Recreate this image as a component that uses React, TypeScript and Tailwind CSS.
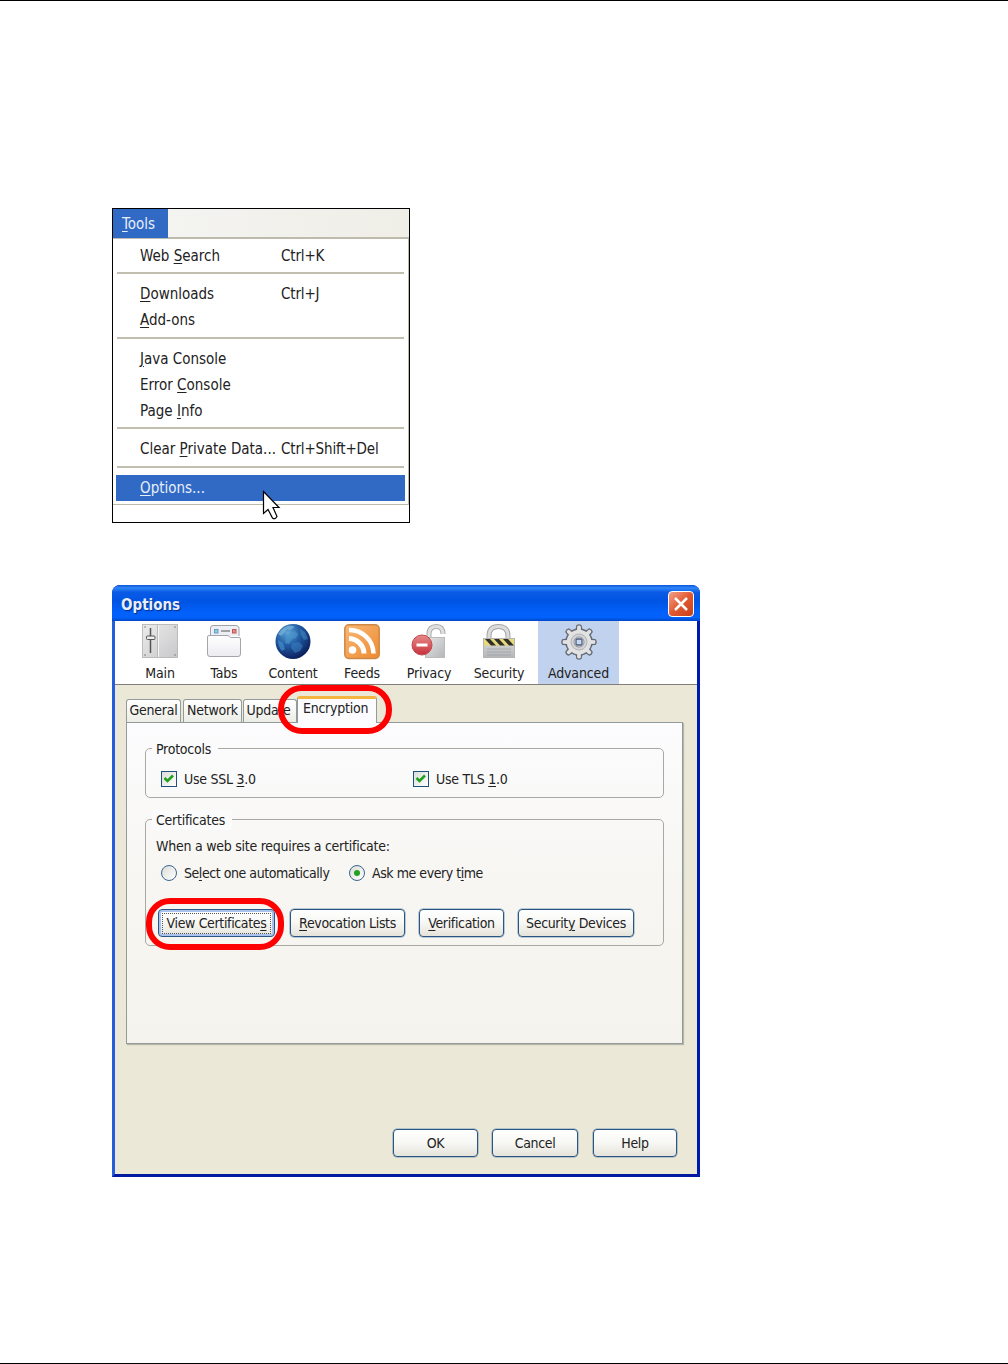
import React from 'react';
import clsx from 'clsx';

// '&' marks the accelerator letter, as in native menu resources
function Label({ text, className }: { text: string; className?: string }) {
  const at = text.indexOf('&');
  if (at < 0) return <span className={clsx('whitespace-pre', className)}>{text}</span>;
  return (
    <span className={clsx('whitespace-pre', className)}>
      {text.slice(0, at)}
      <span className="underline decoration-1 underline-offset-2">{text[at + 1]}</span>
      {text.slice(at + 2)}
    </span>
  );
}

interface MenuEntry {
  label: string;
  shortcut?: string;
  active?: boolean;
}

const menuGroups: MenuEntry[][] = [
  [{ label: 'Web &Search', shortcut: 'Ctrl+K' }],
  [{ label: '&Downloads', shortcut: 'Ctrl+J' }, { label: '&Add-ons' }],
  [{ label: '&Java Console' }, { label: 'Error &Console' }, { label: 'Page &Info' }],
  [{ label: 'Clear &Private Data...', shortcut: 'Ctrl+Shift+Del' }],
  [{ label: '&Options...', active: true }],
];

function Cursor() {
  return (
    <svg className="absolute left-[149px] top-[281px]" width="20" height="32" viewBox="0 0 20 32">
      <path d="M1.500 1.500V23.500L6 19.500L10.500 28Q13 30 15 26.500L11 17.500H17Z" fill="#fff" stroke="#000" strokeWidth="1.200" />
    </svg>
  );
}

function ToolsMenu() {
  return (
    <div className="relative h-[315px] w-[298px] border border-black bg-white text-[15px]">
      <div className="flex h-[30px] border-b-2 border-[#bfbbac] bg-gradient-to-r from-[#f5f5f3] to-[#efeee7]">
        <div className="h-[29px] w-[55px] bg-[#316ac5] pl-[9px] leading-[30px] text-[#e8effa]">
          <Label text="&Tools" />
        </div>
      </div>
      <div className="h-[266px] border-b border-r border-[#bfbbac] px-[3px] pt-1">
        {menuGroups.map((group, i) => (
          <React.Fragment key={i}>
            {i > 0 && (
              <div className="h-[12.5px] px-[1px] pt-[3px]">
                <div className="h-[2px] bg-[#c3bfb0]" />
              </div>
            )}
            {group.map((item) => (
              <div
                key={item.label}
                className={clsx('flex h-[26px] items-center pl-6', item.active ? 'bg-[#316ac5] text-[#e8effa]' : 'text-[#222]')}
              >
                <Label text={item.label} className="w-[141px]" />
                {item.shortcut && <Label text={item.shortcut} className="tracking-[-0.15px]" />}
              </div>
            ))}
          </React.Fragment>
        ))}
      </div>
      <Cursor />
    </div>
  );
}

function MainIcon() {
  return (
    <svg width="36" height="36" viewBox="0 0 36 36">
      <defs>
        <linearGradient id="main-bg" x1="0" y1="0" x2="1" y2="1">
          <stop offset="0" stopColor="#ececec" />
          <stop offset="1" stopColor="#c8c8ca" />
        </linearGradient>
      </defs>
      <rect x="0.500" y="0.500" width="35" height="33" fill="url(#main-bg)" stroke="#bcbcbe" />
      <path d="M15.500 1V33" stroke="#bbb" />
      <path d="M16.500 1V33" stroke="#f5f5f5" />
      <path d="M8.500 4V29" stroke="#555" strokeWidth="1.500" />
      <rect x="4.500" y="12" width="8.500" height="3.500" rx="1" fill="#eee" stroke="#555" />
      <g fill="#777">
        <circle cx="3" cy="3" r="0.800" />
        <circle cx="33" cy="3" r="0.800" />
        <circle cx="3" cy="31" r="0.800" />
        <circle cx="33" cy="31" r="0.800" />
      </g>
    </svg>
  );
}

function TabsIcon() {
  return (
    <svg width="36" height="36" viewBox="0 0 36 36">
      <defs>
        <linearGradient id="tabs-bg" x1="0" y1="0" x2="0" y2="1">
          <stop offset="0" stopColor="#fff" />
          <stop offset="1" stopColor="#ececf0" />
        </linearGradient>
      </defs>
      <path d="M4.500 12V4Q4.500 1.500 7 1.500H30Q32.500 1.500 33 4V12" fill="#eeeff4" stroke="#a0a2aa" />
      <rect x="8.500" y="5.500" width="3.500" height="3.500" fill="#9dc6df" stroke="#5f9fc4" />
      <path d="M15 7H24" stroke="#888" strokeWidth="1.500" />
      <rect x="26.500" y="5.500" width="3.500" height="3.500" fill="#e08a8a" stroke="#c65555" />
      <path d="M1.500 13Q1.500 11.500 3 11.500H22L24.500 13.500H33Q34.500 13.500 34.500 15V30Q34.500 32.500 32 32.500H4Q1.500 32.500 1.500 30Z" fill="url(#tabs-bg)" stroke="#a3a4ac" />
    </svg>
  );
}

function GlobeIcon() {
  return (
    <svg width="36" height="36" viewBox="0 0 36 36">
      <defs>
        <radialGradient id="globe-bg" cx="0.35" cy="0.25" r="0.8">
          <stop offset="0" stopColor="#5fa6d8" />
          <stop offset="0.45" stopColor="#215ba3" />
          <stop offset="1" stopColor="#0a1a58" />
        </radialGradient>
      </defs>
      <circle cx="18" cy="17.500" r="17.500" fill="url(#globe-bg)" />
      <path d="M3 10Q8 2 16 1.500L20 3L15 6L12 5L9 9L6 12Z" fill="#86bfdc" opacity="0.6" />
      <path d="M15 9L20 7L23 10L21 14L17 15L14 20L10 19L11 13Z" fill="#4d97cc" opacity="0.6" />
      <path d="M3 16L8 19L10 25L7 27Q3 23 3 16Z" fill="#4a9bd1" opacity="0.6" />
      <path d="M17 19L24 18L28 22L25 27L20 29L16 24Z" fill="#3d83c4" opacity="0.55" />
      <path d="M25 5L30 8L33 15L29 16L26 11Z" fill="#4c92c9" opacity="0.5" />
    </svg>
  );
}

function FeedsIcon() {
  return (
    <svg width="36" height="36" viewBox="0 0 36 36">
      <defs>
        <linearGradient id="feed-bg" x1="0" y1="0" x2="1" y2="1">
          <stop offset="0" stopColor="#f8b978" />
          <stop offset="1" stopColor="#ee8a30" />
        </linearGradient>
      </defs>
      <rect x="0.800" y="0.800" width="34.400" height="33.700" rx="4" fill="url(#feed-bg)" stroke="#cf8844" strokeWidth="1.500" />
      <circle cx="8.500" cy="26" r="3.800" fill="#fff" />
      <path d="M5 14.500A15.500 15.500 0 0 1 20 29.500" fill="none" stroke="#fff" strokeWidth="5" />
      <path d="M5 6A24 24 0 0 1 29.500 29.500" fill="none" stroke="#fff" strokeWidth="4.500" />
    </svg>
  );
}

function PrivacyIcon() {
  return (
    <svg width="36" height="36" viewBox="0 0 36 36">
      <defs>
        <linearGradient id="priv-lock" x1="0" y1="0" x2="1" y2="1">
          <stop offset="0" stopColor="#e6e6e6" />
          <stop offset="1" stopColor="#b4b6b8" />
        </linearGradient>
        <linearGradient id="priv-stop" x1="0" y1="0" x2="0" y2="1">
          <stop offset="0" stopColor="#e88a8a" />
          <stop offset="1" stopColor="#c8303a" />
        </linearGradient>
      </defs>
      <path d="M18 17V10Q18 2.500 25.500 2.500Q32 2.500 32 10" fill="none" stroke="#aaa" strokeWidth="5" />
      <path d="M18 17V10Q18 2.500 25.500 2.500Q32 2.500 32 10" fill="none" stroke="#e0e0e0" strokeWidth="3" />
      <rect x="14.500" y="13.500" width="19" height="20" fill="url(#priv-lock)" stroke="#bbb" />
      <circle cx="11" cy="21" r="10" fill="url(#priv-stop)" stroke="#c04a50" />
      <rect x="5.500" y="19.500" width="11" height="3" fill="#fff" />
    </svg>
  );
}

function SecurityIcon() {
  return (
    <svg width="36" height="36" viewBox="0 0 36 36">
      <defs>
        <linearGradient id="sec-lock" x1="0" y1="0" x2="0" y2="1">
          <stop offset="0" stopColor="#dadada" />
          <stop offset="1" stopColor="#b4b7ba" />
        </linearGradient>
      </defs>
      <path d="M8 16V12Q8 2.500 17.500 2.500Q27 2.500 27 12V16" fill="none" stroke="#a5a5a5" strokeWidth="5" />
      <path d="M8 16V12Q8 2.500 17.500 2.500Q27 2.500 27 12V16" fill="none" stroke="#dcdcdc" strokeWidth="3" />
      <rect x="2.500" y="14.500" width="31" height="19" fill="url(#sec-lock)" stroke="#b5b5b5" />
      <rect x="3" y="15" width="30" height="6.500" fill="#e8d87c" />
      <path d="M4 15H9L15 21.500H10ZM13 15H18L24 21.500H19ZM22 15H27L33 21.500H28Z" fill="#30302b" />
      <path d="M6 25H30M6 28H30M6 31H30" stroke="#8d9194" strokeOpacity="0.5" />
    </svg>
  );
}

function GearIcon() {
  const teeth = [0, 45, 90, 135, 180, 225, 270, 315];
  return (
    <svg width="36" height="36" viewBox="0 0 36 36">
      <g fill="#e2e2e3" stroke="#656c77" strokeWidth="1.400">
        {teeth.map((deg) => (
          <path key={deg} d="M15 7L16 1.500Q18 0.300 20 1.500L21 7Z" transform={`rotate(${deg} 18 18)`} />
        ))}
        <circle cx="18" cy="18" r="13" />
      </g>
      {teeth.map((deg) => (
        <path key={deg} d="M15.800 8L16.600 2H19.400L20.200 8Z" fill="#e2e2e3" transform={`rotate(${deg} 18 18)`} />
      ))}
      <circle cx="18" cy="18" r="8" fill="#d4d4d6" stroke="#b0b3b9" />
      <circle cx="18" cy="18" r="5" fill="#f2f2f4" stroke="#8b919c" />
      <rect x="15" y="15" width="6" height="6" rx="1" fill="#c9d8f1" stroke="#4d5c79" strokeWidth="1.300" />
    </svg>
  );
}

const categories = [
  { name: 'Main', icon: <MainIcon />, box: 'w-[60px]' },
  { name: 'Tabs', icon: <TabsIcon />, box: 'w-[68px]' },
  { name: 'Content', icon: <GlobeIcon />, box: 'w-[70px]' },
  { name: 'Feeds', icon: <FeedsIcon />, box: 'w-[68px]' },
  { name: 'Privacy', icon: <PrivacyIcon />, box: 'w-[66px]' },
  { name: 'Security', icon: <SecurityIcon />, box: 'w-[74px]' },
  { name: 'Advanced', icon: <GearIcon />, box: 'ml-[2px] w-[81px] bg-[#c1d2ee]' },
];

function TitleBar() {
  return (
    <div className="flex h-9 items-center justify-between rounded-t-[7px] bg-[linear-gradient(180deg,#0a55d8_0%,#2f86f8_8%,#0a5be6_20%,#0054e3_45%,#0260fa_75%,#0262fb_90%,#0047c8_100%)] pl-[9px] pr-[6px]">
      <span className="pt-[4px] text-[15px] font-bold tracking-normal text-[#e6effd] [text-shadow:1px_1px_1px_#0a2a80]">Options</span>
      <div className="mt-[2px] flex h-[26px] w-[26px] items-center justify-center rounded-[4px] border border-white bg-gradient-to-br from-[#f0a088] via-[#e2582f] to-[#c8401c]">
        <svg width="16" height="16" viewBox="0 0 16 16">
          <path d="M2 2L14 14M14 2L2 14" stroke="#fff" strokeWidth="2.500" />
        </svg>
      </div>
    </div>
  );
}

function Toolbar() {
  return (
    <div className="flex h-[64px] border-b border-[#7f7f78] bg-white pl-[15px] tracking-[-0.15px]">
      {categories.map((c) => (
        <div key={c.name} className={clsx('flex flex-col items-center pt-[3px] text-[#222]', c.box)}>
          {c.icon}
          <span className="mt-[3px] leading-5">{c.name}</span>
        </div>
      ))}
    </div>
  );
}

const tabs = [
  { name: 'General', box: 'w-[55px]' },
  { name: 'Network', box: 'ml-[2px] w-[59px]' },
  { name: 'Update', box: 'ml-[1px] w-[54px] pr-[3px]' },
];

function TabStrip() {
  return (
    <div className="relative flex h-[27px] items-end">
      {tabs.map((t) => (
        <div
          key={t.name}
          className={clsx(
            'flex h-[23px] items-center justify-center rounded-t-[3px] border border-b-0 border-[#919b9c] bg-gradient-to-b from-white to-[#ededE6] pb-[2px] text-[#222]',
            t.box
          )}
        >
          {t.name}
        </div>
      ))}
      <div className="-mb-px h-[27px] w-[80px] rounded-t-[3px] border border-b-0 border-t-[3px] border-[#919b9c] border-t-[#f5b440] bg-[#fcfcfe] pl-[5px] leading-[18px] text-[#222]">
        Encryption
      </div>
      <div className="absolute -top-[10px] left-[152px] h-[49px] w-[114px] rounded-[24px] border-[6px] border-[#fe0000]" />
    </div>
  );
}

function Group({ title, className, children }: { title: string; className: string; children: React.ReactNode }) {
  return (
    <div className={clsx('rounded-[5px] border border-[#a9a9a4]', className)}>
      <div className="-mt-[10px] ml-[6px] flex h-5 w-fit items-center bg-[#fbfbfb] pl-1 pr-[7px] text-[#222]">{title}</div>
      {children}
    </div>
  );
}

function Check({ label, className }: { label: string; className?: string }) {
  return (
    <div className={clsx('flex items-center gap-[7px]', className)}>
      <div className="flex h-4 w-4 items-center justify-center border border-[#1c5180] bg-gradient-to-br from-[#dcdcd7] to-white">
        <svg width="12" height="12" viewBox="0 0 12 12">
          <path d="M1.500 5L4.500 8L10 2.500" fill="none" stroke="#21a121" strokeWidth="2.600" />
        </svg>
      </div>
      <Label text={label} className="leading-5" />
    </div>
  );
}

function Radio({ label, checked, className }: { label: string; checked?: boolean; className?: string }) {
  return (
    <div className={clsx('flex items-center gap-[7px]', className)}>
      <div className="flex h-4 w-4 items-center justify-center rounded-full border border-[#3a6590] bg-gradient-to-br from-[#dcdcd7] to-white">
        {checked && <div className="h-[6px] w-[6px] rounded-full bg-[#21a121]" />}
      </div>
      <Label text={label} className="leading-5 tracking-[-0.45px]" />
    </div>
  );
}

function Button({ label, className, focused }: { label: string; className: string; focused?: boolean }) {
  return (
    <div
      className={clsx(
        'flex h-7 items-center justify-center rounded-[4px] border-[1.5px] border-[#2b5684] bg-gradient-to-b from-white via-[#f7f7f4] to-[#e5e3da] tracking-[-0.35px] text-[#222]',
        focused ? 'shadow-[inset_0_0_0_2px_#a9c3ee]' : 'shadow-[0_0_0_0.5px_#7d9bb8]',
        className
      )}
    >
      {focused ? (
        <span className="flex h-[21px] w-[109px] items-center justify-center border border-dotted border-[#555]">
          <Label text={label} />
        </span>
      ) : (
        <Label text={label} />
      )}
    </div>
  );
}

function EncryptionPanel() {
  return (
    <div className="h-[322px] w-[557px] border border-[#919b9c] bg-gradient-to-b from-[#fcfcfe] via-[#f7f6f2] via-50% to-[#f5f3ed] px-[18px] pt-[25px] text-[#222] shadow-[1px_1px_1px_#b9b6a8]">
      <Group title="Protocols" className="h-[50px] w-[519px]">
        <div className="flex pl-[15px] pt-[10px]">
          <Check label="Use SSL &3.0" className="w-[252px]" />
          <Check label="Use TLS &1.0" />
        </div>
      </Group>
      <Group title="Certificates" className="relative mt-[21px] h-[127px] w-[519px]">
        <div className="pl-[10px] pt-[6px] leading-5">When a web site requires a certificate:</div>
        <div className="flex pl-[15px] pt-[7px]">
          <Radio label="Se&lect one automatically" className="w-[188px]" />
          <Radio label="Ask me every t&ime" checked />
        </div>
        <div className="flex pl-[12px] pt-[26px]">
          <Button label="View Certificate&s" className="w-[117px]" focused />
          <Button label="&Revocation Lists" className="ml-[15px] w-[115px]" />
          <Button label="&Verification" className="ml-[14px] w-[85px]" />
          <Button label="Securit&y Devices" className="ml-[14px] w-[116px]" />
        </div>
        <div className="absolute left-0 top-[78px] h-[52px] w-[138px] rounded-[24px] border-[6px] border-[#fe0000]" />
      </Group>
    </div>
  );
}

function OptionsDialog() {
  return (
    <div className="h-[592px] w-[588px] overflow-hidden rounded-t-[8px] bg-[#0a2fb4] tracking-[-0.25px]">
      <TitleBar />
      <div className="h-[556px] border-x-[3px] border-b-[3px] border-l-[#245edb] border-r-[#0019b0] border-b-[#0019a0]">
        <div className="h-[553px] bg-[#ebe8d7]">
          <Toolbar />
          <div className="pl-[11px] pt-[10px]">
            <TabStrip />
            <EncryptionPanel />
          </div>
          <div className="flex pl-[278px] pt-[85px]">
            <Button label="OK" className="w-[85px]" />
            <Button label="Cancel" className="ml-[14px] w-[86px]" />
            <Button label="Help" className="ml-[15px] w-[84px]" />
          </div>
        </div>
      </div>
    </div>
  );
}

export default function App() {
  return (
    <div className="flex h-[1364px] w-[1008px] flex-col border-y border-black bg-white pl-[112px] pt-[207px] font-['DejaVu_Sans_Condensed','DejaVu_Sans',sans-serif] text-[14px] [font-stretch:condensed]">
      <ToolsMenu />
      <div className="mt-[62px]">
        <OptionsDialog />
      </div>
    </div>
  );
}
